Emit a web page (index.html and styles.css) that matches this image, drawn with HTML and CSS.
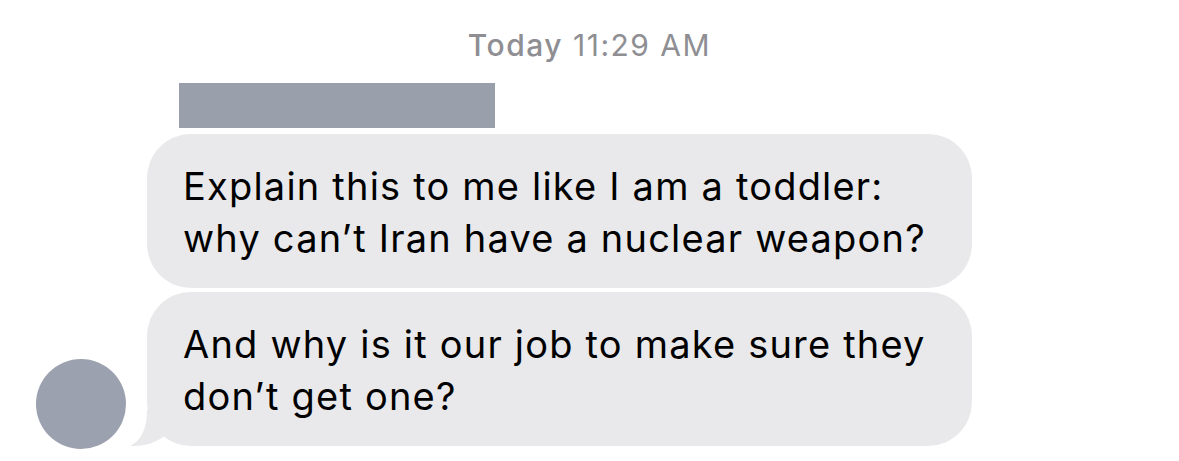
FILE: index.html
```html
<!DOCTYPE html>
<html>
<head>
<meta charset="utf-8">
<link rel="stylesheet" href="styles.css">
</head>
<body>
<div class="screen">
  <div class="time"><span class="day">Today</span> 11:29 AM</div>
  <div class="thread">
    <div class="avatar"></div>
    <div class="messages">
      <div class="sender"></div>
      <div class="bubble">Explain this to me like I am a toddler:<br>why can’t Iran have a nuclear weapon?</div>
      <div class="bubble">And why is it our job to make sure they<br>don’t get one?<svg class="tail" width="40" height="36" viewBox="0 0 40 36"><path d="M17 0 C17 18 12 30 0 36 C12 36.5 22 34 30 29 L40 22 L40 0 Z"/></svg></div>
    </div>
  </div>
</div>
</body>
</html>
```
FILE: styles.css
```css
html, body {
  margin: 0;
  padding: 0;
  background: #ffffff;
}
.screen {
  width: 1179px;
  height: 461px;
  overflow: hidden;
  font-family: "Inter", "Roboto", sans-serif;
}
.time {
  text-align: center;
  color: #8e8e93;
  font-size: 30px;
  line-height: 34px;
  padding-top: 28px;
  letter-spacing: 1.5px;
}
.day {
  font-weight: 500;
}
.thread {
  display: flex;
  align-items: flex-end;
  padding-left: 36px;
  gap: 21px;
}
.avatar {
  width: 90px;
  height: 90px;
  border-radius: 50%;
  background: #9ba1ae;
  margin-bottom: -3px;
  flex: none;
}
.messages {
  display: flex;
  flex-direction: column;
  align-items: flex-start;
  gap: 4px;
}
.sender {
  width: 316px;
  height: 45px;
  margin-left: 32px;
  margin-top: 21px;
  margin-bottom: 2px;
  background: #9aa0ab;
}
.bubble {
  position: relative;
  background: #e9e9eb;
  color: #000;
  font-size: 38px;
  line-height: 52px;
  padding: 26px 46px 24px 36px;
  border-radius: 44px;
  letter-spacing: 1.2px;
}
.tail {
  position: absolute;
  left: -17px;
  bottom: 0;
  fill: #e9e9eb;
}
```
